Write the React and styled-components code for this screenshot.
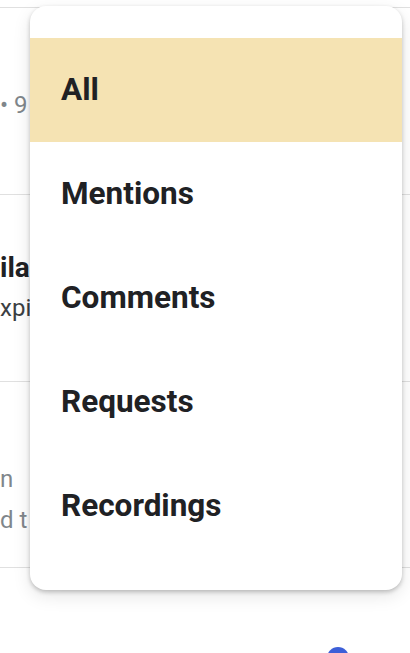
import React from "react";
import styled, { createGlobalStyle } from "styled-components";

const GlobalStyle = createGlobalStyle`
  html, body {
    margin: 0;
    padding: 0;
    background: #fff;
  }
  body {
    font-family: Roboto, "Noto Sans", sans-serif;
    -webkit-font-smoothing: antialiased;
  }
`;

const FILTERS = ["All", "Mentions", "Comments", "Requests", "Recordings"];

// list behind the menu; only the left edge of each row shows
const rows = [
  { pad: 81, meta: ["• 9 days ago"], tone: "muted" },
  { pad: 58, title: "ilable to watch", meta: ["xpires in 7 days"], tone: "dark" },
  { pad: 81, meta: ["n", "d t\u00a0 the recording"], tone: "muted" },
];

const Screen = styled.div`
  position: relative;
  width: 410px;
  height: 653px;
  overflow: hidden;
  background: #fff;
`;

const List = styled.div`
  display: flex;
  flex-direction: column;
  padding-top: 7px;
`;

const Row = styled.div`
  height: 187px;
  box-sizing: border-box;
  padding-top: ${(p) => p.pad}px;
  border-top: 1px solid #e0e0e0;
  display: flex;
  flex-direction: column;
  gap: 9px;
  white-space: nowrap;
  overflow: hidden;
  &:last-child {
    height: 187px;
    border-bottom: 1px solid #e0e0e0;
  }
`;

const RowTitle = styled.div`
  font-size: 28px;
  font-weight: 700;
  color: #202124;
  line-height: 30px;
`;

const RowMeta = styled.div`
  font-size: 24px;
  color: ${(p) => (p.tone === "dark" ? "#3c4043" : "#80868b")};
  line-height: 32px;
`;

const BottomBar = styled.div`
  display: flex;
  justify-content: flex-end;
  padding: 79px 61px 0 0;
`;

const Dot = styled.div`
  width: 22px;
  height: 22px;
  border-radius: 50%;
  background: #3d5fd8;
`;

const Menu = styled.ul`
  position: absolute;
  top: 6px;
  left: 30px;
  width: 372px;
  margin: 0;
  padding: 32px 0;
  list-style: none;
  background: #fff;
  border-radius: 16px;
  box-shadow: 0 2px 4px rgba(0, 0, 0, 0.22), 0 6px 18px rgba(0, 0, 0, 0.1);
`;

const MenuItem = styled.li`
  height: 104px;
  box-sizing: border-box;
  padding: 0 0 2px 31px;
  display: flex;
  align-items: center;
  font-size: 31.5px;
  font-weight: 700;
  color: #202124;
  background: ${(p) => (p.active ? "#f5e3b3" : "transparent")};
`;

export default function App() {
  return (
    <Screen>
      <GlobalStyle />
      <List>
        {rows.map((r, i) => (
          <Row key={i} pad={r.pad}>
            {r.title && <RowTitle>{r.title}</RowTitle>}
            {r.meta.map((m, j) => (
              <RowMeta key={j} tone={r.tone}>
                {m}
              </RowMeta>
            ))}
          </Row>
        ))}
      </List>
      <BottomBar>
        <Dot />
      </BottomBar>
      <Menu>
        {FILTERS.map((f, i) => (
          <MenuItem key={f} active={i === 0}>
            {f}
          </MenuItem>
        ))}
      </Menu>
    </Screen>
  );
}
